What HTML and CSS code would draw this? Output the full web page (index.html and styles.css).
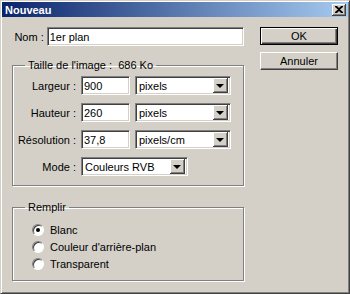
FILE: index.html
```html
<!DOCTYPE html>
<html lang="fr">
<head>
  <meta charset="UTF-8">
  <title>Nouveau</title>
  <link rel="stylesheet" href="styles.css">
</head>
<body>

  <div class="window">
    <div class="title-bar">
      <span class="title">Nouveau</span>
      <span class="close-btn">
        <svg width="8" height="7" viewBox="0 0 8 7">
          <path d="M0 0h2l2 2 2-2h2v1L5 3.5 8 6v1H6L4 5 2 7H0V6l3-2.5L0 1z" fill="#000"/>
        </svg>
      </span>
    </div>

    <div class="content">
      <div class="main-col">
        <div class="name-row">
          <label class="name-label" for="nom">Nom :</label>
          <input class="field name-field" type="text" id="nom" value="1er plan">
        </div>

        <fieldset class="group size-group">
          <legend>Taille de l'image :&nbsp; 686 Ko</legend>
          <div class="size-grid">
            <label>Largeur :</label>
            <input class="field" type="text" value="900">
            <div class="field select"><span>pixels</span><span class="arrow"></span></div>

            <label>Hauteur :</label>
            <input class="field" type="text" value="260">
            <div class="field select"><span>pixels</span><span class="arrow"></span></div>

            <label>Résolution :</label>
            <input class="field" type="text" value="37,8">
            <div class="field select"><span>pixels/cm</span><span class="arrow"></span></div>

            <label>Mode :</label>
            <div class="field select mode-select"><span>Couleurs RVB</span><span class="arrow"></span></div>
          </div>
        </fieldset>

        <fieldset class="group fill-group">
          <legend>Remplir</legend>
          <div class="radio-row"><span class="radio checked"></span>Blanc</div>
          <div class="radio-row"><span class="radio"></span>Couleur d'arrière-plan</div>
          <div class="radio-row"><span class="radio"></span>Transparent</div>
        </fieldset>
      </div>

      <div class="button-col">
        <button class="btn btn-default">OK</button>
        <button class="btn">Annuler</button>
      </div>
    </div>
  </div>

</body>
</html>
```

FILE: styles.css
```css
body {
  margin: 0;
  padding: 0;
  font-family: "Liberation Sans", Arial, sans-serif;
  font-size: 11px;
  color: #000;
  background-color: #d4d0c8;
}
.window {
  width: 350px;
  height: 294px;
  box-sizing: border-box;
  padding: 1px;
  border: 1px solid;
  border-color: #d4d0c8 #404040 #404040 #d4d0c8;
  box-shadow: inset 1px 1px #fff, inset -1px -1px #808080;
  background-color: #d4d0c8;
}
.title-bar {
  height: 15px;
  display: flex;
  align-items: center;
  justify-content: space-between;
  padding: 0 2px 0 3px;
  background: linear-gradient(to right, #0a246a, #a6caf0);
}
.title {
  color: #fff;
  font-weight: bold;
}
.close-btn {
  width: 14px;
  height: 12px;
  box-sizing: border-box;
  display: flex;
  align-items: center;
  justify-content: center;
  background-color: #d4d0c8;
  border-right: 1px solid #404040;
  border-bottom: 1px solid #404040;
  box-shadow: inset 1px 1px #fff, inset -1px -1px #808080;
}
.content {
  display: flex;
  gap: 16px;
  padding: 10px 0 0 10px;
}
.main-col {
  width: 232px;
}
.name-row {
  display: flex;
  align-items: center;
  gap: 3px;
}
.name-label {
  width: 32px;
  text-align: right;
}
.field {
  height: 19px;
  box-sizing: border-box;
  margin: 0;
  padding: 0 2px;
  font: inherit;
  color: #000;
  background-color: #fff;
  border: 1px solid;
  border-color: #808080 #fff #fff #808080;
  box-shadow: inset 1px 1px #404040, inset -1px -1px #d4d0c8;
  outline: none;
  -webkit-appearance: none;
  appearance: none;
}
.name-field {
  width: 199px;
}
.group {
  margin: 13px 0 0 0;
  border: 1px solid #808080;
  box-shadow: inset 1px 1px #fff, 1px 1px #fff;
}
.group legend {
  margin-left: 12px;
  padding: 0 3px;
  line-height: 13px;
}
.size-group {
  padding: 4px 10px 9px 0;
}
.size-grid {
  display: grid;
  grid-template-columns: 63px 49px 96px;
  grid-auto-rows: 19px;
  column-gap: 5px;
  row-gap: 8px;
  align-items: center;
}
.size-grid label {
  text-align: right;
}
.size-grid .field {
  width: 100%;
}
.select {
  display: flex;
  align-items: center;
  justify-content: space-between;
  padding: 2px 2px 2px 3px;
}
.size-grid .mode-select {
  grid-column: 2 / span 2;
  width: 107px;
}
.arrow {
  width: 15px;
  height: 15px;
  box-sizing: border-box;
  display: flex;
  align-items: center;
  justify-content: center;
  background-color: #d4d0c8;
  border-right: 1px solid #404040;
  border-bottom: 1px solid #404040;
  box-shadow: inset 1px 1px #fff, inset -1px -1px #808080;
}
.arrow::after {
  content: "";
  border-left: 4px solid transparent;
  border-right: 4px solid transparent;
  border-top: 4px solid #000;
  margin-top: 1px;
}
.fill-group {
  margin-top: 15px;
  padding: 7px 0 8px 0;
}
.radio-row {
  height: 17px;
  display: flex;
  align-items: center;
  gap: 6px;
  padding-left: 19px;
}
.radio {
  width: 12px;
  height: 12px;
  box-sizing: border-box;
  border-radius: 50%;
  border: 1px solid;
  border-color: #808080 #fff #fff #808080;
  box-shadow: inset 1px 1px #404040;
  background-color: #fff;
  display: flex;
  align-items: center;
  justify-content: center;
}
.radio.checked::after {
  content: "";
  width: 4px;
  height: 4px;
  border-radius: 50%;
  background-color: #000;
}
.button-col {
  display: flex;
  flex-direction: column;
  gap: 7px;
}
.btn {
  width: 78px;
  height: 18px;
  box-sizing: border-box;
  margin: 0;
  padding: 0;
  font: inherit;
  color: #000;
  background-color: #d4d0c8;
  border: 1px solid;
  border-color: #fff #404040 #404040 #fff;
  box-shadow: inset -1px -1px #808080;
}
.btn-default {
  border: 1px solid #000;
  box-shadow: inset 1px 1px #fff, inset -1px -1px #404040, inset -2px -2px #808080;
}
```
